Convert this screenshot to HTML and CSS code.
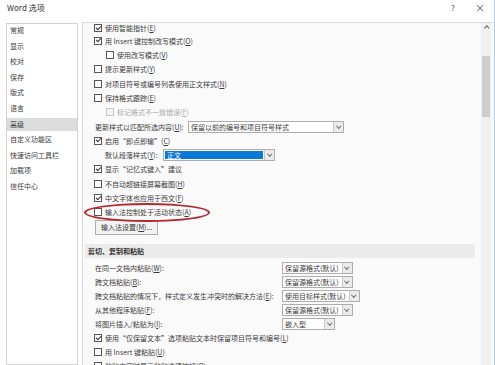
FILE: index.html
```html
<!DOCTYPE html>
<html lang="zh-CN">
<head>
<meta charset="UTF-8">
<title>Word 选项</title>
<link rel="stylesheet" href="styles.css">
</head>
<body>
<div class="window">
  <div class="titlebar">
    <span class="title">Word 选项</span>
    <span class="tb-btn help">?</span>
    <span class="tb-btn close">×</span>
  </div>
  <div class="main">
    <ul class="nav">
      <li>常规</li>
      <li>显示</li>
      <li>校对</li>
      <li>保存</li>
      <li>版式</li>
      <li>语言</li>
      <li class="active">高级</li>
      <li>自定义功能区</li>
      <li>快速访问工具栏</li>
      <li>加载项</li>
      <li>信任中心</li>
    </ul>
    <div class="content">
      <div class="pane">
        <div class="scroller">
          <div class="row first"><span class="cb on"></span>使用智能指针(<u>E</u>)</div>
          <div class="row"><span class="cb on"></span>用 Insert 键控制改写模式(<u>O</u>)</div>
          <div class="row sub"><span class="cb"></span>使用改写模式(<u>V</u>)</div>
          <div class="row"><span class="cb"></span>提示更新样式(<u>Y</u>)</div>
          <div class="row"><span class="cb"></span>对项目符号或编号列表使用正文样式(<u>N</u>)</div>
          <div class="row"><span class="cb"></span>保持格式跟踪(<u>E</u>)</div>
          <div class="row sub disabled"><span class="cb"></span>标记格式不一致错误(<u>F</u>)</div>
          <div class="row">
            <span class="label label-update">更新样式以匹配所选内容(<u>U</u>):</span>
            <span class="select w-update"><span class="val">保留以前的编号和项目符号样式</span><span class="dd"></span></span>
          </div>
          <div class="row"><span class="cb on"></span>启用“即点即输”(<u>C</u>)</div>
          <div class="row">
            <span class="label label-para">默认段落样式(<u>Y</u>):</span>
            <span class="select focus w-para"><span class="val">正文</span><span class="dd"></span></span>
          </div>
          <div class="row"><span class="cb on"></span>显示“记忆式键入”建议</div>
          <div class="row"><span class="cb"></span>不自动超链接屏幕截图(<u>H</u>)</div>
          <div class="row"><span class="cb on"></span>中文字体也应用于西文(<u>F</u>)</div>
          <div class="row marked"><span class="cb"></span>输入法控制处于活动状态(<u>A</u>)<span class="ring"></span></div>
          <button class="btn-set">输入法设置(<u>M</u>)...</button>

          <div class="section">剪切、复制和粘贴</div>
          <div class="prow">
            <span class="plabel">在同一文档内粘贴(<u>W</u>):</span>
            <span class="select"><span class="val">保留源格式(默认)</span><span class="dd"></span></span>
          </div>
          <div class="prow">
            <span class="plabel">跨文档粘贴(<u>B</u>):</span>
            <span class="select"><span class="val">保留源格式(默认)</span><span class="dd"></span></span>
          </div>
          <div class="prow">
            <span class="plabel">跨文档粘贴的情况下，样式定义发生冲突时的解决方法(<u>E</u>):</span>
            <span class="select"><span class="val">使用目标样式(默认)</span><span class="dd"></span></span>
          </div>
          <div class="prow">
            <span class="plabel">从其他程序粘贴(<u>F</u>):</span>
            <span class="select"><span class="val">保留源格式(默认)</span><span class="dd"></span></span>
          </div>
          <div class="prow">
            <span class="plabel">将图片插入/粘贴为(<u>I</u>):</span>
            <span class="select w-pic"><span class="val">嵌入型</span><span class="dd"></span></span>
          </div>
          <div class="prow"><span class="cb on"></span>使用“仅保留文本”选项粘贴文本时保留项目符号和编号(<u>L</u>)</div>
          <div class="prow"><span class="cb"></span>用 Insert 键粘贴(<u>U</u>)</div>
          <div class="prow"><span class="cb"></span>粘贴内容时显示粘贴选项按钮(<u>O</u>)</div>
        </div>
      </div>
      <div class="scrollbar">
        <span class="up"></span>
        <span class="thumb"></span>
      </div>
    </div>
  </div>
</div>
</body>
</html>
```

FILE: styles.css
```css
body {
  margin: 0;
  font-family: "Noto Sans CJK SC", "Noto Sans", sans-serif;
  font-size: 7px;
  color: #3a3a3a;
}
u {
  text-decoration-thickness: 1px;
}
.window {
  width: 495px;
  height: 365px;
  box-sizing: border-box;
  border-right: 1px solid #b4cde8;
  background: #fff;
  display: flex;
  flex-direction: column;
  overflow: hidden;
}

/* title bar */
.titlebar {
  height: 22px;
  flex: none;
  display: flex;
  align-items: flex-start;
  padding: 2px 9px 0 7px;
  box-sizing: border-box;
  font-size: 8px;
  line-height: 11px;
  color: #333;
}
.tb-btn {
  width: 10px;
  text-align: center;
  color: #555;
}
.help {
  margin-left: auto;
}
.close {
  margin-left: 17px;
  font-size: 10px;
}

/* main area */
.main {
  flex: 1;
  display: flex;
  gap: 4px;
  padding-left: 6px;
  min-height: 0;
}
.nav {
  width: 70px;
  flex: none;
  margin: 1px 0 0 0;
  padding: 0;
  list-style: none;
  border: 1px solid #d2d2d2;
  background: #fff;
}
.nav li {
  height: 12px;
  line-height: 12px;
  padding: 0 0 1.6px 3px;
  margin-bottom: 2px;
  white-space: nowrap;
}
.nav li.active {
  background: #dcdcdc;
}

.content {
  flex: 1;
  min-width: 0;
  display: flex;
  border-left: 1px solid #dadada;
  border-top: 1px solid #dadada;
  background: #fafafa;
}
.pane {
  flex: 1;
  min-width: 0;
  padding: 0 6px 0 11px;
  overflow: hidden;
}

.row {
  height: 14.3px;
  display: flex;
  align-items: center;
  white-space: nowrap;
}
/* first row sits right under the top edge (list is scrolled) */
.row.first {
  height: 10.6px;
}
.row.sub {
  padding-left: 12px;
}
.row.disabled {
  color: #ababab;
}
.row.disabled .cb {
  border-color: #c8c8c8;
  background: #f3f3f3;
}

.cb {
  width: 6px;
  height: 6px;
  flex: none;
  border: 1px solid #575757;
  background: #fff;
  margin-right: 3px;
  position: relative;
}
.cb.on::after {
  content: "";
  position: absolute;
  left: 0.5px;
  top: 0.5px;
  width: 4px;
  height: 2px;
  border-left: 1px solid #333;
  border-bottom: 1px solid #333;
  transform: rotate(-45deg);
}

.label {
  flex: none;
  padding-left: 1px;
}
.label-update {
  width: 93px;
}
.label-para {
  width: 58px;
  padding-left: 11px;
}

/* dropdowns */
.select {
  display: inline-flex;
  align-items: stretch;
  height: 12px;
  box-sizing: border-box;
  border: 1px solid #adadad;
  background: #fff;
  flex: none;
}
.select .val {
  flex: 1;
  padding: 0 3px 0 2px;
  line-height: 10px;
  white-space: nowrap;
}
.select .dd {
  width: 9px;
  flex: none;
  border-left: 1px solid #c9c9c9;
  background: #ebebeb;
  position: relative;
}
.select .dd::after {
  content: "";
  position: absolute;
  left: 2.5px;
  top: 2px;
  width: 2.5px;
  height: 2.5px;
  border-right: 1px solid #6a6a6a;
  border-bottom: 1px solid #6a6a6a;
  transform: rotate(45deg);
}
.w-update {
  width: 156px;
}
.w-para {
  width: 112px;
}
.w-pic {
  width: 53px;
}
.select.focus .val {
  margin: 1px;
  line-height: 8px;
  background: #0a78d6;
  color: #fff;
}

/* highlighted option */
.marked {
  position: relative;
}
.ring {
  position: absolute;
  left: -10px;
  top: -2px;
  width: 122px;
  height: 15px;
  border: 2px solid #b3262e;
  border-radius: 50%;
}

.btn-set {
  display: block;
  height: 15px;
  margin: 1px 0 0 1px;
  padding: 0 5px;
  border: 1px solid #adadad;
  background: #f2f2f2;
  font-family: inherit;
  font-size: 7px;
  line-height: 13px;
  color: #3a3a3a;
}

.section {
  height: 14px;
  line-height: 14px;
  margin: 8.6px 0 3px -9px;
  padding-left: 3px;
  background: #ebebeb;
  font-weight: bold;
  color: #333;
}
.prow {
  height: 14px;
  display: flex;
  align-items: center;
  white-space: nowrap;
}
.plabel {
  width: 187px;
  flex: none;
  padding-left: 1px;
}

/* scrollbar */
.scrollbar {
  width: 10px;
  flex: none;
  margin-right: 3px;
  background: #f0f0f0;
  display: flex;
  flex-direction: column;
  align-items: center;
}
.up {
  height: 7px;
  width: 10px;
  position: relative;
}
.up::after {
  content: "";
  position: absolute;
  left: 3.5px;
  top: 3px;
  width: 2.5px;
  height: 2.5px;
  border-left: 1px solid #606060;
  border-top: 1px solid #606060;
  transform: rotate(45deg);
}
.thumb {
  width: 8px;
  height: 61px;
  margin-top: 26px;
  background: #cdcdcd;
}
```
